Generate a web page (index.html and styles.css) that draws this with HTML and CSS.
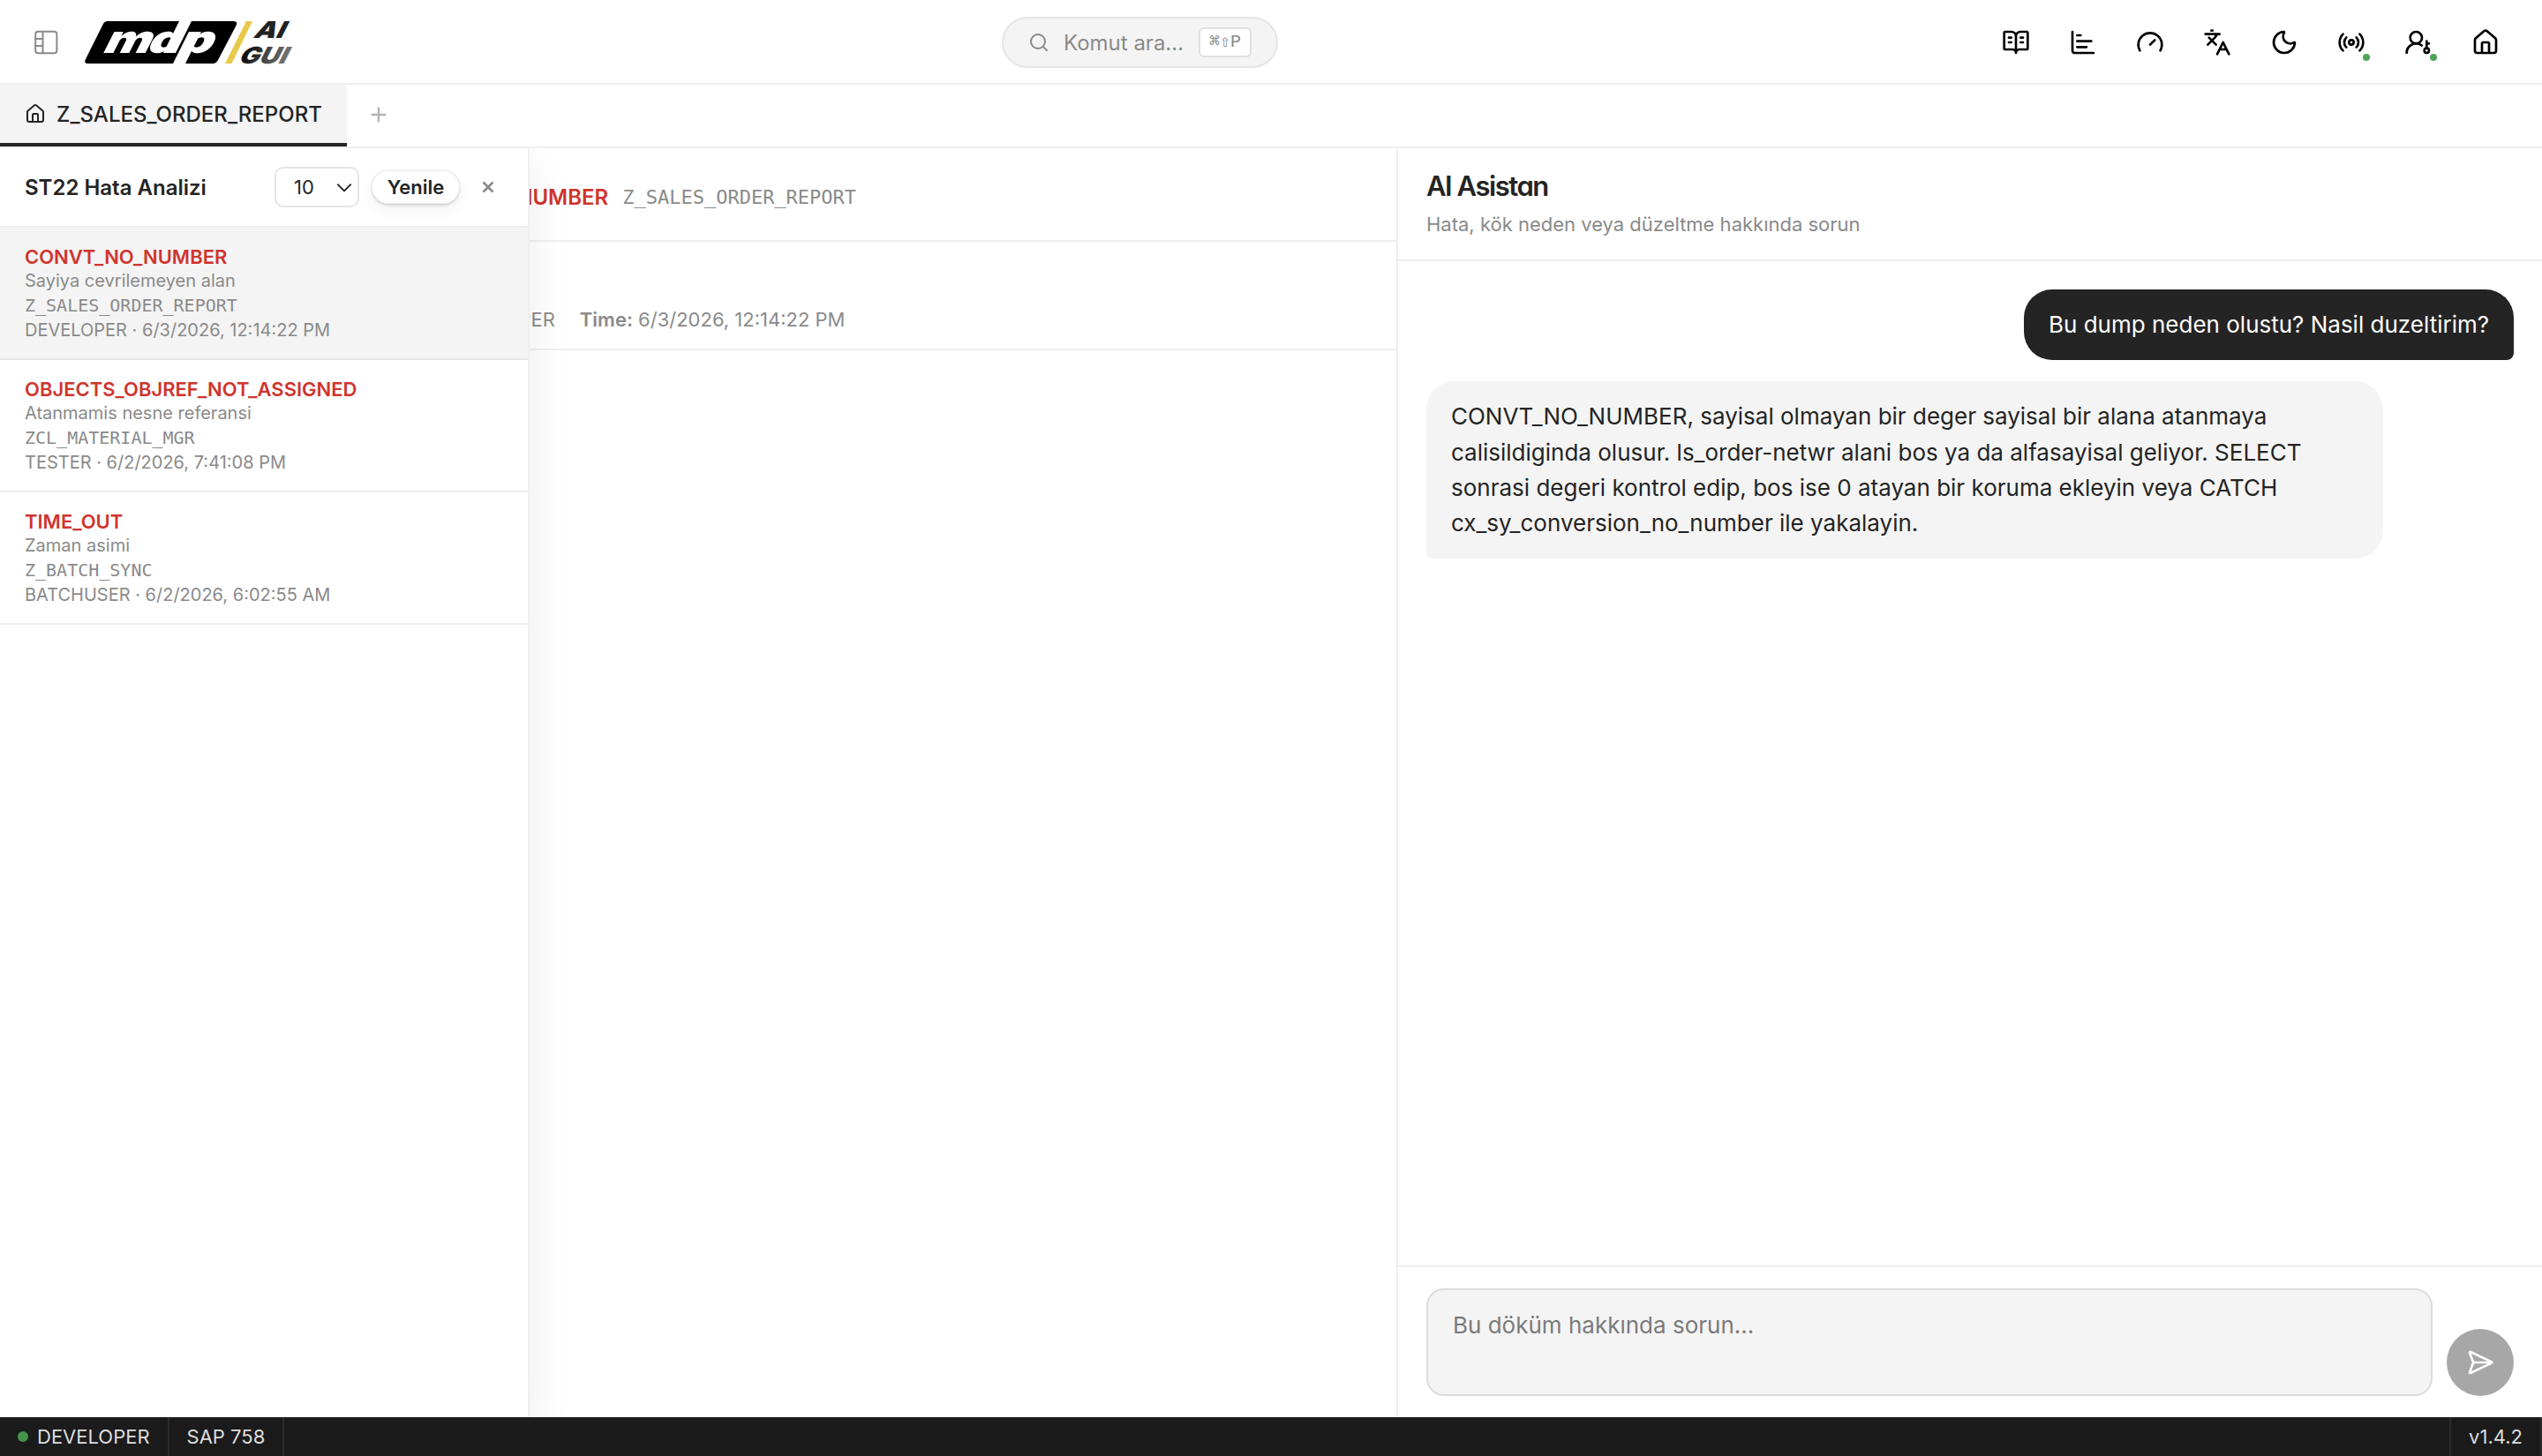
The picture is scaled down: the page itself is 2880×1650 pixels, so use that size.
FILE: index.html
```html
<!DOCTYPE html>
<html lang="tr">

	<head>
		<meta charset="UTF-8">
		<title>ST22 Hata Analizi</title>
		<link rel="stylesheet" href="styles.css">
	</head>

	<body>
		<div id="app">
			<header id="topbar">
				<div class="brand">
					<svg class="panel-icon" viewBox="0 0 28 28">
						<rect x="2.2" y="1.7" width="24.2" height="24.6" rx="3" />
						<path d="M10.5 1.7v24.6M2.2 9.9h8.3M2.2 18h8.3" />
					</svg>
					<svg class="logo" viewBox="0 0 236 48">
						<defs>
							<linearGradient id="gui" x1="0" x2="1">
								<stop offset="0.1" stop-color="#111" />
								<stop offset="0.5" stop-color="#444" />
								<stop offset="1" stop-color="#777" />
							</linearGradient>
						</defs>
						<path d="M26 0H168Q174 0 171.500 5L151 44Q149 48 145 48H4Q-1.500 48 1 43L21 3Q22.500 0 26 0Z" />
						<!-- the two slashes that split the plate -->
						<path class="cut" d="M107 0H121L103 36H89ZM118 12H132L114 48H100Z" />
						<g class="mdp" transform="translate(0 36) skewX(-27)">
							<text x="18.500" textLength="53" lengthAdjust="spacingAndGlyphs">m</text>
							<text x="68" textLength="37" lengthAdjust="spacingAndGlyphs">d</text>
							<text x="104" textLength="38" lengthAdjust="spacingAndGlyphs">p</text>
						</g>
						<path fill="#e9c94b" d="M183 0H190L166.500 48H159Z" />
						<text class="ai" fill="#222" transform="translate(190 19) skewX(-27)" textLength="34" lengthAdjust="spacingAndGlyphs">AI</text>
						<text class="ai" fill="url(#gui)" transform="translate(173 48) skewX(-27)" textLength="54" lengthAdjust="spacingAndGlyphs">GUI</text>
					</svg>
				</div>

				<div id="search">
					<svg class="ico24" viewBox="0 0 24 24"><circle cx="11" cy="11" r="8" /><path d="m21 21-4.340-4.340" /></svg>
					<span>Komut ara…</span>
					<kbd>⌘⇧P</kbd>
				</div>

				<div class="tools">
					<div class="tool">
						<svg viewBox="0 0 24 24"><path d="M12 7v14M16 12h2M16 8h2M6 12h2M6 8h2M3 18a1 1 0 0 1-1-1V4a1 1 0 0 1 1-1h5a4 4 0 0 1 4 4 4 4 0 0 1 4-4h5a1 1 0 0 1 1 1v13a1 1 0 0 1-1 1h-6a3 3 0 0 0-3 3 3 3 0 0 0-3-3z" /></svg>
					</div>
					<div class="tool">
						<svg viewBox="0 0 24 24"><path d="M3 3v16a2 2 0 0 0 2 2h16M7 6h3M7 11h12M7 16h8" /></svg>
					</div>
					<div class="tool">
						<svg viewBox="0 0 24 24"><path d="m12 14 4-4M3.340 19a10 10 0 1 1 17.320 0" /></svg>
					</div>
					<div class="tool">
						<svg viewBox="0 0 24 24"><path d="m5 8 6 6M4 14l6-6 2-3M2 5h12M7 2h1M22 22l-5-10-5 10M14 18h6" /></svg>
					</div>
					<div class="tool">
						<svg viewBox="0 0 24 24"><path d="M20.985 12.486a9 9 0 1 1-9.473-9.472c.405-.022.617.46.402.803a6 6 0 0 0 8.268 8.268c.344-.215.825-.004.803.401" /></svg>
					</div>
					<div class="tool">
						<svg viewBox="0 0 24 24"><circle cx="12" cy="12" r="2" /><path d="M16.247 7.761a6 6 0 0 1 0 8.478M19.075 4.933a10 10 0 0 1 0 14.134M4.925 19.067a10 10 0 0 1 0-14.134M7.753 16.239a6 6 0 0 1 0-8.478" /></svg>
						<i class="badge"></i>
					</div>
					<div class="tool">
						<svg viewBox="0 0 24 24"><circle cx="10" cy="8" r="5" /><circle cx="19" cy="19" r="2" /><path d="M19 11v6M19 13h2M2 21a8 8 0 0 1 12.868-6.349" /></svg>
						<i class="badge"></i>
					</div>
					<div class="tool">
						<svg viewBox="0 0 24 24"><path d="M15 21v-8a1 1 0 0 0-1-1h-4a1 1 0 0 0-1 1v8M3 10a2 2 0 0 1 .709-1.528l7-5.999a2 2 0 0 1 2.582 0l7 5.999A2 2 0 0 1 21 10v9a2 2 0 0 1-2 2H5a2 2 0 0 1-2-2z" /></svg>
					</div>
				</div>
			</header>

			<nav id="tabs">
				<div class="tab on">
					<svg class="ico24" viewBox="0 0 24 24"><path d="M15 21v-8a1 1 0 0 0-1-1h-4a1 1 0 0 0-1 1v8M3 10a2 2 0 0 1 .709-1.528l7-5.999a2 2 0 0 1 2.582 0l7 5.999A2 2 0 0 1 21 10v9a2 2 0 0 1-2 2H5a2 2 0 0 1-2-2z" /></svg>
					<span>Z_SALES_ORDER_REPORT</span>
				</div>
				<svg class="plus" viewBox="0 0 18 18"><path d="M9 0.500v17M0.500 9h17" /></svg>
			</nav>

			<main id="work">
				<section id="detail">
					<div class="detail-head">
						<b>CONVT_NO_NUMBER</b>
						<code>Z_SALES_ORDER_REPORT</code>
					</div>
					<div class="detail-meta">
						<span><b>User:</b> DEVELOPER</span>
						<span><b>Time:</b> 6/3/2026, 12:14:22 PM</span>
					</div>
				</section>

				<section id="chat">
					<div class="chat-head">
						<h2>AI Asistan</h2>
						<p>Hata, kök neden veya düzeltme hakkında sorun</p>
					</div>
					<div class="messages">
						<div class="msg me">Bu dump neden olustu? Nasil duzeltirim?</div>
						<div class="msg bot">CONVT_NO_NUMBER, sayisal olmayan bir deger sayisal bir alana atanmaya calisildiginda olusur. ls_order-netwr alani bos ya da alfasayisal geliyor. SELECT sonrasi degeri kontrol edip, bos ise 0 atayan bir koruma ekleyin veya CATCH cx_sy_conversion_no_number ile yakalayin.</div>
					</div>
					<div class="composer">
						<div class="input">Bu döküm hakkında sorun...</div>
						<div class="send">
							<svg viewBox="0 0 24 24"><path d="M3.714 3.048a.498.498 0 0 0-.683.627l2.843 7.627a2 2 0 0 1 0 1.396l-2.842 7.627a.498.498 0 0 0 .682.627l18-8.500a.5.5 0 0 0 0-.904zM6 12h16" /></svg>
						</div>
					</div>
				</section>

				<!-- dump list, slides over the detail -->
				<aside id="dumps">
					<div class="dumps-head">
						<h3>ST22 Hata Analizi</h3>
						<div class="select">10
							<svg viewBox="0 0 16 10"><path d="M1 1.500l7 7 7-7" /></svg>
						</div>
						<div class="refresh">Yenile</div>
						<svg class="close" viewBox="0 0 14 14"><path d="M1.500 1.500l11 11M12.500 1.500l-11 11" /></svg>
					</div>
					<ul>
						<li class="on">
							<b>CONVT_NO_NUMBER</b>
							<p>Sayiya cevrilemeyen alan</p>
							<code>Z_SALES_ORDER_REPORT</code>
							<p>DEVELOPER · 6/3/2026, 12:14:22 PM</p>
						</li>
						<li>
							<b>OBJECTS_OBJREF_NOT_ASSIGNED</b>
							<p>Atanmamis nesne referansi</p>
							<code>ZCL_MATERIAL_MGR</code>
							<p>TESTER · 6/2/2026, 7:41:08 PM</p>
						</li>
						<li>
							<b>TIME_OUT</b>
							<p>Zaman asimi</p>
							<code>Z_BATCH_SYNC</code>
							<p>BATCHUSER · 6/2/2026, 6:02:55 AM</p>
						</li>
					</ul>
				</aside>
			</main>

			<footer id="status">
				<div class="cell"><i class="dot"></i>DEVELOPER</div>
				<div class="cell">SAP 758</div>
				<div class="cell version">v1.4.2</div>
			</footer>
		</div>
	</body>

</html>
```
FILE: styles.css
```css
* {
	margin: 0;
	padding: 0;
	box-sizing: border-box;
	list-style-type: none;
}

body {
	font-family: Inter, "Liberation Sans", sans-serif;
	font-size: 22px;
	color: #242424;
	background: #fff;
}

svg {
	display: block;
	flex: none;
	fill: none;
	stroke: currentColor;
	stroke-width: 2;
	stroke-linecap: round;
	stroke-linejoin: round;
}

code {
	font-family: "DejaVu Sans Mono", monospace;
}

#app {
	height: 1650px;
	display: flex;
	flex-direction: column;
	overflow: hidden;
}

/* top bar */
#topbar {
	height: 96px;
	flex: none;
	display: grid;
	grid-template-columns: 1135px 313px 1fr;
	align-items: center;
	box-shadow: inset 0 -2px #efefef;
}

.brand {
	display: flex;
	align-items: center;
	padding-left: 38px;
}

.panel-icon {
	width: 28px;
	height: 28px;
	color: #8a8a8a;
}

.logo {
	width: 236px;
	height: 48px;
	margin-left: 30px;
	overflow: visible;
	fill: #000;
	stroke: none;
}

.logo .cut,
.logo .mdp {
	fill: #fff;
}

.logo .mdp {
	font-size: 44px;
	font-weight: 900;
}

.logo .ai {
	font-size: 26px;
	font-weight: 900;
}

#search {
	height: 58px;
	display: flex;
	align-items: center;
	padding: 0 28px;
	font-size: 24px;
	color: #8a8a8a;
	background: #f4f4f4;
	border: 2px solid #e5e5e5;
	border-radius: 29px;
}

.ico24 {
	width: 24px;
	height: 24px;
}

#search span {
	margin-left: 16px;
}

kbd {
	height: 34px;
	line-height: 30px;
	margin-left: auto;
	padding: 0 10px;
	font-family: "Liberation Mono", "DejaVu Sans Mono", monospace;
	font-size: 20px;
	background: #fff;
	border: 2px solid #e0e0e0;
	border-radius: 6px;
}

.tools {
	display: flex;
	gap: 4px;
	justify-content: flex-end;
	padding-right: 28px;
	color: #000;
}

.tool {
	position: relative;
	width: 72px;
	height: 72px;
	display: flex;
	align-items: center;
	justify-content: center;
}

.tool svg {
	width: 32px;
	height: 32px;
}

.badge {
	position: absolute;
	right: 15px;
	bottom: 15px;
	width: 8px;
	height: 8px;
	border-radius: 50%;
	background: #4fa355;
}

/* tabs */
#tabs {
	height: 72px;
	flex: none;
	display: flex;
	align-items: flex-start;
	box-shadow: inset 0 -2px #efefef;
}

.tab {
	height: 70px;
	display: flex;
	align-items: center;
	gap: 12px;
	padding: 0 28px;
	font-size: 24px;
	font-weight: 500;
}

.tab.on {
	background: #f4f4f4;
	border-bottom: 4px solid #242424;
}

.plus {
	width: 18px;
	height: 18px;
	margin: 25px 0 0 27px;
	color: #b5b5b5;
	stroke-width: 2.4;
	stroke-linecap: butt;
}

/* work area */
#work {
	position: relative;
	flex: 1;
	display: flex;
	overflow: hidden;
}

#detail {
	width: 1584px;
	border-right: 2px solid #efefef;
}

.detail-head {
	height: 106px;
	display: flex;
	align-items: center;
	gap: 16px;
	padding: 7px 0 0 439px;
	border-bottom: 2px solid #efefef;
	color: #8a8a8a;
}

.detail-head b {
	font-size: 24px;
	font-weight: 600;
	color: #cf352e;
}

.detail-meta {
	height: 123px;
	display: flex;
	align-items: flex-end;
	gap: 28px;
	padding: 0 0 20px 438px;
	line-height: 26px;
	border-bottom: 2px solid #efefef;
	color: #8a8a8a;
}

.detail-meta b {
	font-weight: 600;
}

/* dump list */
#dumps {
	position: absolute;
	top: 0;
	left: 0;
	bottom: 0;
	width: 600px;
	background: #fff;
	border-right: 2px solid #efefef;
	box-shadow: 0 16px 48px rgba(0, 0, 0, 0.08);
}

.dumps-head {
	height: 90px;
	display: flex;
	align-items: center;
	padding-left: 28px;
	border-bottom: 2px solid #efefef;
}

.dumps-head h3 {
	width: 283px;
	font-size: 24px;
	font-weight: 600;
}

.select {
	width: 96px;
	height: 46px;
	display: flex;
	align-items: center;
	justify-content: space-between;
	padding: 0 6px 0 20px;
	border: 2px solid #e5e5e5;
	border-radius: 10px;
}

.select svg {
	width: 18px;
	height: 11px;
	stroke-width: 1.8;
	stroke-linecap: butt;
}

.refresh {
	width: 100px;
	height: 38px;
	line-height: 38px;
	margin-left: 14px;
	text-align: center;
	font-weight: 600;
	border-radius: 19px;
	box-shadow: inset 0 0 0 1px #ececec, 0 0 0 1px rgba(0, 0, 0, 0.04), 0 2px 3px rgba(0, 0, 0, 0.12), 0 8px 16px rgba(0, 0, 0, 0.05);
}

.close {
	width: 14px;
	height: 14px;
	margin-left: 25px;
	color: #8a8a8a;
	stroke-width: 2.6;
	stroke-linecap: butt;
}

#dumps li {
	height: 150px;
	padding: 20px 28px 0;
	font-size: 20px;
	line-height: 28px;
	color: #8a8a8a;
	border-bottom: 2px solid #efefef;
}

#dumps li.on {
	background: #f4f4f4;
	border-color: #e5e5e5;
}

#dumps li b {
	display: block;
	font-size: 22px;
	font-weight: 600;
	line-height: 26px;
	color: #cf352e;
}

#dumps li code {
	display: block;
}

/* assistant */
#chat {
	flex: 1;
	display: flex;
	flex-direction: column;
}

.chat-head {
	height: 128px;
	padding: 24px 32px 0;
	border-bottom: 2px solid #efefef;
}

.chat-head h2 {
	font-size: 31px;
	font-weight: 600;
	line-height: 38px;
	letter-spacing: -0.047em;
	font-feature-settings: "cv11";
}

.chat-head p {
	margin-top: 11px;
	line-height: 26px;
	color: #8a8a8a;
}

.messages {
	flex: 1;
	display: flex;
	flex-direction: column;
	gap: 24px;
	padding: 32px;
	font-size: 26px;
	line-height: 1.55;
}

.msg {
	max-width: 88%;
	padding: 20px 28px;
	border-radius: 32px;
}

.msg.me {
	align-self: flex-end;
	color: #fff;
	background: #242424;
	border-bottom-right-radius: 8px;
}

.msg.bot {
	align-self: flex-start;
	background: #f4f4f4;
	border-bottom-left-radius: 8px;
}

.composer {
	height: 172px;
	display: flex;
	align-items: flex-end;
	gap: 16px;
	padding: 0 32px 24px;
	border-top: 2px solid #efefef;
}

.input {
	flex: 1;
	height: 122px;
	padding: 20px 28px;
	font-size: 26px;
	line-height: 40px;
	color: #7a7a7a;
	background: #f4f4f4;
	border: 2px solid #dcdcdc;
	border-radius: 20px;
}

.send {
	width: 76px;
	height: 76px;
	display: flex;
	align-items: center;
	justify-content: center;
	color: #fff;
	background: #a7a7a7;
	border-radius: 50%;
}

.send svg {
	width: 32px;
	height: 32px;
}

/* status bar */
#status {
	height: 44px;
	flex: none;
	display: flex;
	color: #ddd;
	background: #1b1b1b;
}

.cell {
	display: flex;
	align-items: center;
	padding: 0 20px;
	border-right: 2px solid #2b2b2b;
}

.version {
	margin-left: auto;
	border-left: 2px solid #2b2b2b;
}

.dot {
	width: 12px;
	height: 12px;
	margin-right: 10px;
	border-radius: 50%;
	background: #46934c;
}
```
